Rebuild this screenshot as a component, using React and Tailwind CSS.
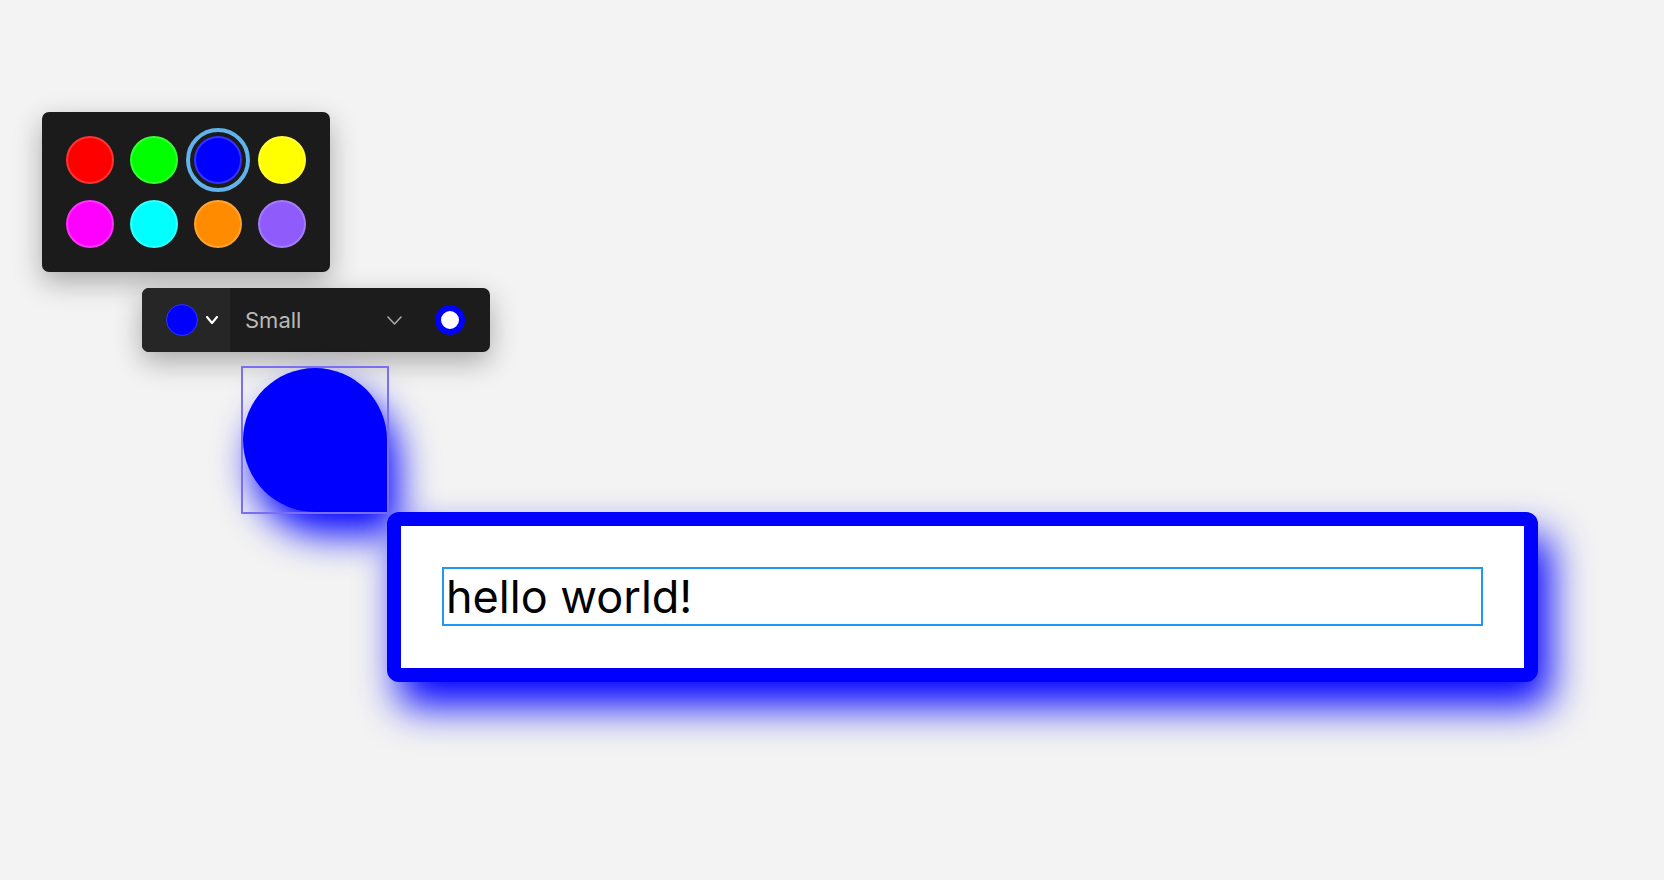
import React from 'react';

const swatches = [
  '#ff0000',
  '#00ff00',
  '#0000ff',
  '#ffff00',
  '#ff00ff',
  '#00ffff',
  '#ff8c00',
  '#8f5bfb',
];

const Chevron = ({ w, h, color, stroke }) => (
  <svg width={w} height={h} viewBox={`0 0 ${w} ${h}`} fill="none">
    <polyline
      points={`1,1 ${w / 2},${h - 1} ${w - 1},1`}
      stroke={color}
      strokeWidth={stroke}
      strokeLinecap="round"
      strokeLinejoin="round"
    />
  </svg>
);

const Palette = () => (
  <div className="absolute left-[42px] top-[112px] w-[288px] h-[160px] rounded-[7px] bg-[#1b1b1b] p-6 shadow-[0_10px_28px_rgba(0,0,0,0.3)]">
    <div className="grid grid-cols-4 gap-4">
      {swatches.map((c, i) => (
        <div key={c} className="relative w-12 h-12">
          {i === 2 && (
            <div className="absolute -inset-[8px] rounded-full border-[4px] border-[#61b3ee]" />
          )}
          <div
            className="w-12 h-12 rounded-full border-2 border-white/20"
            style={{ backgroundColor: c }}
          />
        </div>
      ))}
    </div>
  </div>
);

const Toolbar = () => (
  <div className="absolute left-[142px] top-[288px] w-[348px] h-[64px] rounded-[7px] bg-[#1c1c1c] flex shadow-[0_10px_28px_rgba(0,0,0,0.3)]">
    <div className="w-[88px] h-full rounded-l-[7px] bg-[#262626] flex items-center pl-6 gap-2">
      <div className="w-8 h-8 rounded-full bg-[#0000ff] border border-[#3434ff]" />
      <Chevron w={12} h={8} color="#ffffff" stroke={2.2} />
    </div>
    <div className="flex-1 flex items-center pl-[15px] pr-[25px]">
      <span className="text-[22px] text-[#b9b9b9] leading-none">Small</span>
      <div className="ml-auto mr-[33px]">
        <Chevron w={15} h={9} color="#a8a8a8" stroke={1.6} />
      </div>
      <div className="w-[30px] h-[30px] rounded-full border-[6px] border-[#0000ff] bg-white" />
    </div>
  </div>
);

const Blob = () => (
  <>
    <div className="absolute left-[243px] top-[368px] w-[144px] h-[144px] bg-[#0000ff] rounded-tl-full rounded-tr-full rounded-bl-full rounded-br-[10px] shadow-[10px_22px_38px_#0000ff]" />
    <div className="absolute left-[241px] top-[366px] w-[148px] h-[148px] border-2 border-[#7a6ef2]" />
  </>
);

const TextBox = () => (
  <div className="absolute left-[387px] top-[512px] w-[1151px] h-[170px] rounded-[12px] border-[14px] border-[#0000ff] bg-white p-[41px] shadow-[12px_24px_40px_#0000ff]">
    <div className="w-full h-[59px] border-2 border-[#2196f3] flex items-center px-[2px]">
      <span className="text-[45px] text-black leading-none">hello world!</span>
    </div>
  </div>
);

export default function App() {
  return (
    <div
      className="relative w-[1664px] h-[880px] bg-[#f3f3f3] overflow-hidden"
      style={{ fontFamily: 'Inter, "Noto Sans", sans-serif' }}
    >
      <Palette />
      <Toolbar />
      <Blob />
      <TextBox />
    </div>
  );
}
